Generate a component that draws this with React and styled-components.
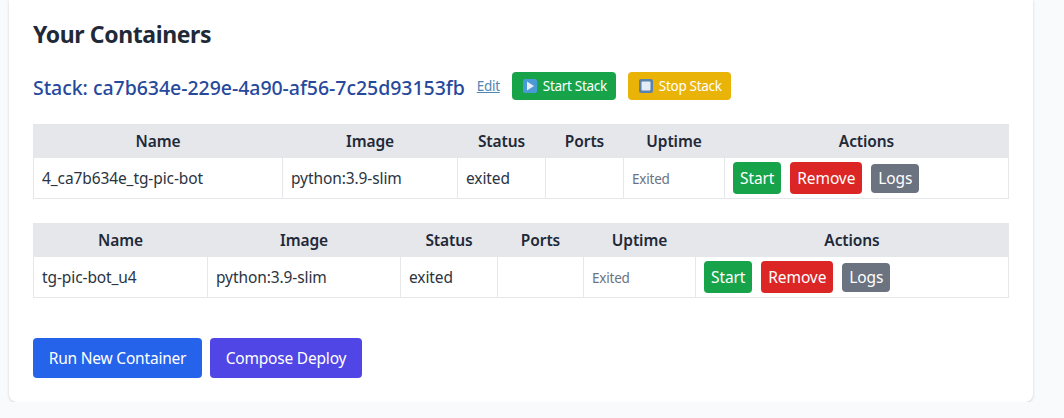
import React from "react";
import styled, { createGlobalStyle } from "styled-components";

const GlobalStyle = createGlobalStyle`
  html, body {
    margin: 0;
    padding: 0;
    background: #f9fafb;
    font-family: "Noto Sans", "Open Sans", sans-serif;
    color: #1f2937;
  }
`;

const Card = styled.section`
  width: 1024px;
  height: 402px;
  box-sizing: border-box;
  margin-left: 9px;
  padding: 16px 24px 0;
  background: #fff;
  border-radius: 0 0 8px 8px;
  box-shadow: 0 1px 3px rgba(0, 0, 0, 0.16);
`;

const Title = styled.h2`
  margin: 0 0 20px;
  font-size: 23px;
  letter-spacing: -0.4px;
  line-height: 36px;
  font-weight: 700;
  color: #1f2937;
`;

const StackHeader = styled.div`
  display: flex;
  align-items: center;
  height: 28px;
  margin-bottom: 24px;
`;

const StackName = styled.h3`
  margin: 3px 12px 0 0;
  font-size: 19.5px;
  letter-spacing: -0.04px;
  line-height: 28px;
  font-weight: 500;
  color: #27499c;
`;

const EditLink = styled.a`
  margin-right: 12px;
  font-size: 13.5px;
  letter-spacing: -0.3px;
  color: #4f86b3;
  text-decoration: underline;
  cursor: pointer;
`;

const StackButton = styled.button`
  display: flex;
  align-items: center;
  gap: 6px;
  height: 28px;
  margin-right: 12px;
  padding: 0 9px 0 11px;
  border: none;
  border-radius: 4px;
  font: inherit;
  font-size: 13.5px;
  letter-spacing: -0.3px;
  color: #fff;
  background: ${(p) => p.$color};
  cursor: pointer;
`;

const Table = styled.table`
  width: 975px;
  table-layout: fixed;
  border-collapse: collapse;
  margin-bottom: 24px;
`;

const Th = styled.th`
  height: 32px;
  padding: 0;
  border: 1px solid #e5e7eb;
  background: #e5e7eb;
  font-size: 15.5px;
  letter-spacing: -0.1px;
  font-weight: 600;
  color: #1f2937;
`;

const Td = styled.td`
  height: 40px;
  padding: 0 8px;
  border: 1px solid #e5e7eb;
  font-size: 15.5px;
  letter-spacing: -0.1px;
  color: #2b3442;
`;

const Uptime = styled.span`
  font-size: 13.5px;
  letter-spacing: -0.2px;
  color: #6b7280;
`;

const Actions = styled.div`
  display: flex;
  align-items: center;
  gap: 9px;
`;

const ActionButton = styled.button`
  height: ${(p) => p.$height}px;
  padding: 0 7px;
  border: none;
  border-radius: 4px;
  font: inherit;
  font-size: 15.5px;
  letter-spacing: -0.1px;
  color: #fff;
  background: ${(p) => p.$color};
  cursor: pointer;
`;

const Footer = styled.div`
  display: flex;
  gap: 8px;
  margin-top: 40px;
`;

const FooterButton = styled.button`
  height: 40px;
  padding: 0 15.7px;
  border: none;
  border-radius: 4px;
  font: inherit;
  font-size: 15.5px;
  letter-spacing: -0.2px;
  color: #fff;
  background: ${(p) => p.$color};
  cursor: pointer;
`;

const PlayIcon = () => (
  <svg width="14" height="14" viewBox="0 0 14 14">
    <rect width="14" height="14" rx="2" fill="#4a9ad8" />
    <path d="M4 2.5 L11 7 L4 11.5 Z" fill="#e6eff8" />
  </svg>
);

const StopIcon = () => (
  <svg width="14" height="14" viewBox="0 0 14 14">
    <rect width="14" height="14" rx="2" fill="#5b82ad" />
    <rect x="2.5" y="2.5" width="9" height="9" rx="1" fill="#e3edf8" />
  </svg>
);

const tables = [
  { widths: [249, 175, 88, 78, 101, 284], name: "4_ca7b634e_tg-pic-bot" },
  { widths: [174, 193, 97, 86, 112, 313], name: "tg-pic-bot_u4" },
];

const headers = ["Name", "Image", "Status", "Ports", "Uptime", "Actions"];

const App = () => (
  <>
    <GlobalStyle />
    <Card>
      <Title>Your Containers</Title>
      <StackHeader>
        <StackName>Stack: ca7b634e-229e-4a90-af56-7c25d93153fb</StackName>
        <EditLink>Edit</EditLink>
        <StackButton $color="#16a34a"><PlayIcon />Start Stack</StackButton>
        <StackButton $color="#eab308"><StopIcon />Stop Stack</StackButton>
      </StackHeader>
      {tables.map((t) => (
        <Table key={t.name}>
          <colgroup>
            {t.widths.map((w, i) => <col key={i} width={w} />)}
          </colgroup>
          <thead>
            <tr>{headers.map((h) => <Th key={h}>{h}</Th>)}</tr>
          </thead>
          <tbody>
            <tr>
              <Td>{t.name}</Td>
              <Td>python:3.9-slim</Td>
              <Td>exited</Td>
              <Td></Td>
              <Td><Uptime>Exited</Uptime></Td>
              <Td>
                <Actions>
                  <ActionButton $color="#16a34a" $height={32}>Start</ActionButton>
                  <ActionButton $color="#dc2626" $height={32}>Remove</ActionButton>
                  <ActionButton $color="#6b7280" $height={29}>Logs</ActionButton>
                </Actions>
              </Td>
            </tr>
          </tbody>
        </Table>
      ))}
      <Footer>
        <FooterButton $color="#2563eb">Run New Container</FooterButton>
        <FooterButton $color="#4f46e5">Compose Deploy</FooterButton>
      </Footer>
    </Card>
  </>
);

export default App;
